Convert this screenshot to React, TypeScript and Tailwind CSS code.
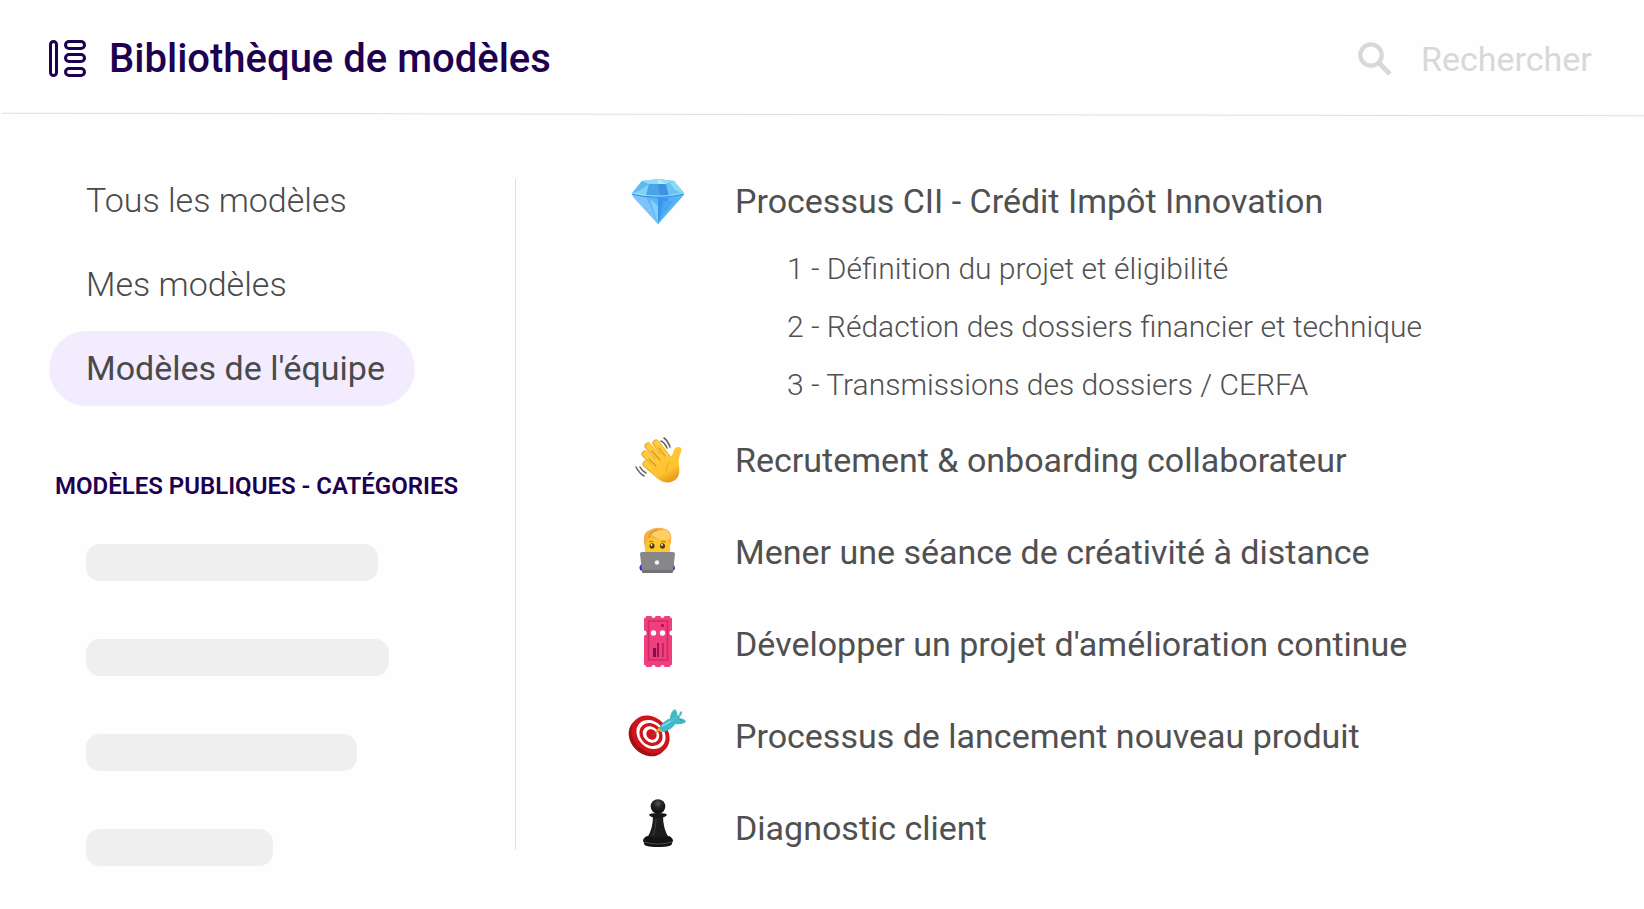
import { clsx } from 'clsx';

const NAV_ITEMS = [
  { label: 'Tous les modèles', active: false },
  { label: 'Mes modèles', active: false },
  { label: "Modèles de l'équipe", active: true },
];

const SKELETONS = ['w-[292px]', 'w-[303px]', 'w-[271px]', 'w-[187px]'];

const TEMPLATES = [
  {
    title: 'Processus CII - Crédit Impôt Innovation',
    icon: <GemIcon />,
    steps: [
      '1 - Définition du projet et éligibilité',
      '2 - Rédaction des dossiers financier et technique',
      '3 - Transmissions des dossiers / CERFA',
    ],
  },
  { title: 'Recrutement & onboarding collaborateur', icon: <WaveIcon />, steps: [] },
  { title: 'Mener une séance de créativité à distance', icon: <CoderIcon />, steps: [] },
  { title: "Développer un projet d'amélioration continue", icon: <TicketIcon />, steps: [] },
  { title: 'Processus de lancement nouveau produit', icon: <TargetIcon />, steps: [] },
  { title: 'Diagnostic client', icon: <PawnIcon />, steps: [] },
];

function LibraryIcon() {
  return (
    <svg width="38" height="38" viewBox="0 0 38 38" fill="none" stroke="#1e0050" strokeWidth="3" aria-hidden="true">
      <rect x="1.5" y="1.5" width="6" height="34" rx="3" />
      <rect x="16.5" y="1.5" width="19" height="7" rx="3.5" />
      <rect x="16.5" y="14.5" width="19" height="7" rx="3.5" />
      <rect x="16.5" y="28.5" width="19" height="7" rx="3.5" />
    </svg>
  );
}

function SearchIcon() {
  return (
    <svg width="34" height="34" viewBox="0 0 34 34" fill="none" stroke="currentColor" aria-hidden="true">
      <circle cx="13" cy="13" r="10.7" strokeWidth="4.2" />
      <path d="M21 21 L32 32" strokeWidth="4.8" />
    </svg>
  );
}

function GemIcon() {
  return (
    <svg width="60" height="60" viewBox="0 0 60 60" aria-hidden="true">
      <path d="M15 10 L31 8 L47 10 L57 22 L56 25 L31 53 L6 25 L5 22 Z" fill="#5bb9f5" />
      <path d="M15 10 L22 13 L19 25 L5 23 Z" fill="#7fd3f8" />
      <path d="M15 10 L5 23 L13 19 L22 13 Z" fill="#62b8ee" />
      <path d="M15 10 L31 8 L47 10 L39 13 H22 Z" fill="#93dcf7" />
      <path d="M31 8 L39 13 H31 Z" fill="#b4edfb" />
      <path d="M22 13 H39 L42 25 H19 Z" fill="#4ba3e8" />
      <path d="M31 13 H39 L42 25 H33 Z" fill="#3e93e0" />
      <path d="M39 13 L47 10 L57 23 L42 25 Z" fill="#6ac3f4" />
      <path d="M47 10 L57 23 L48 19 L43 12 Z" fill="#8adcf8" />
      <path d="M5 23 L20 27 L31 53 L6 26 Z" fill="#7cc3f9" />
      <path d="M20 27 H31 V53 Z" fill="#5cb6f7" />
      <path d="M31 27 H42 L31 53 Z" fill="#3797ef" />
      <path d="M42 27 L57 23 L31 53 Z" fill="#55b4f6" />
      <path d="M23 28 L31 35 L31 53 Z" fill="#83d0fb" />
      <path d="M36 30 L47 30 L33 47 Z" fill="#4aa6f3" />
      <path d="M5 23 Q31 30 57 23" fill="none" stroke="#3a91d6" strokeWidth="1.2" />
      <path d="M5 22 Q31 28 57 22" fill="none" stroke="#9fe4fb" strokeWidth="0.8" />
    </svg>
  );
}

function WaveIcon() {
  return (
    <svg width="60" height="60" viewBox="0 0 60 60" aria-hidden="true">
      <defs>
        <linearGradient id="hand" x1="0" y1="0" x2="0.5" y2="1">
          <stop offset="0" stopColor="#ffcd3c" />
          <stop offset="0.75" stopColor="#fec32f" />
          <stop offset="1" stopColor="#ea9d1e" />
        </linearGradient>
      </defs>
      <g stroke="#e9a524" strokeWidth="7" strokeLinecap="round">
        <path d="M29 13 L42 30" />
        <path d="M21 16 L38 35" />
        <path d="M18 24 L34 40" />
        <path d="M19 34 L32 45" />
      </g>
      <g stroke="#ffcb3a" strokeWidth="5.6" strokeLinecap="round">
        <path d="M29.500 13 L42 30" />
        <path d="M21.500 16 L38 35" />
        <path d="M18.500 24 L34 40" />
        <path d="M19.500 34 L32 45" />
      </g>
      <path
        d="M29 27 L37 22 L42 27 Q45 27 46 23 Q47 17 51 17 Q56 17 54 22 Q51 28 52 36 Q54 49 44 52 Q37 54 30 48 L23 40 Z"
        fill="url(#hand)"
      />
      <path d="M25 21 L33 30 M22 29 L29 36 M32 18 L38 26" fill="none" stroke="#dc941c" strokeWidth="1.2" strokeLinecap="round" />
      <path d="M43 32 Q38 36 40 43" fill="none" stroke="#eda823" strokeWidth="1" strokeLinecap="round" />
      <g fill="none" stroke="#666" strokeWidth="1.6" strokeLinecap="round">
        <path d="M34 11 Q38 13 40 18" />
        <path d="M37 8 Q41 11 43 17" />
        <path d="M13 37 Q15 41 19 43" />
        <path d="M9 37 Q12 43 17 46" />
      </g>
    </svg>
  );
}

function CoderIcon() {
  return (
    <svg width="60" height="60" viewBox="0 0 60 60" aria-hidden="true">
      <path d="M16 41 Q11 44 13 48 Q14 49 18 49 H44 Q48 49 48 46 Q48 43 45 41 Z" fill="#2a2ecb" />
      <path d="M18 20 Q18 9 30 9 Q43 9 43 20 V28 Q43 38 30 38 Q18 38 18 28 Z" fill="#fdc72f" />
      <path d="M18 26 Q14 10 23 8 Q30 4 38 7 Q47 9 43 25 Q43 18 38 16 Q29 19 24 15 Q19 18 18 26 Z" fill="#f3b045" />
      <path d="M23 15 Q27 7 39 8 Q44 11 43 17 Q32 19 25 13 Z" fill="#ffce66" />
      <path d="M22 16 Q22 10 30 8" fill="none" stroke="#cf8a2c" strokeWidth="1" />
      <ellipse cx="25" cy="24" rx="2.500" ry="2.800" fill="#54380f" />
      <ellipse cx="35.500" cy="24" rx="2.500" ry="2.800" fill="#54380f" />
      <circle cx="24.500" cy="23" r="0.900" fill="#fff" />
      <circle cx="35" cy="23" r="0.900" fill="#fff" />
      <path d="M22 20 Q24 18.500 26.500 20 M34 20 Q36.500 18.500 39 20" fill="none" stroke="#a86f17" strokeWidth="1" />
      <path d="M15 30 H46 Q48 30 48 32 L46 49 H15 L13 32 Q13 30 15 30 Z" fill="#87878a" />
      <path d="M15 48 H46 V50 Q46 51 45 51 H16 Q15 51 15 50 Z" fill="#717175" />
      <circle cx="30" cy="40.500" r="2.200" fill="#f5f5f5" />
    </svg>
  );
}

function TicketIcon() {
  return (
    <svg width="60" height="60" viewBox="0 0 60 60" aria-hidden="true">
      <rect x="17" y="2" width="28" height="51" rx="1" fill="#ef3f7d" />
      <rect x="21.500" y="7" width="19" height="39" fill="none" stroke="#cf2867" strokeWidth="1.500" />
      <rect x="34" y="10" width="3" height="3" fill="#b51655" />
      <g fill="#fefefe">
        <circle cx="17" cy="19" r="2.500" />
        <circle cx="26.500" cy="19" r="2.700" />
        <circle cx="35.500" cy="19" r="2.700" />
        <circle cx="45" cy="19" r="2.500" />
        <circle cx="17" cy="2" r="2.200" />
        <circle cx="26.500" cy="2" r="2" />
        <circle cx="35.500" cy="2" r="2" />
        <circle cx="45" cy="2" r="2.200" />
        <circle cx="17" cy="53" r="2.200" />
        <circle cx="26.500" cy="53" r="2" />
        <circle cx="35.500" cy="53" r="2" />
        <circle cx="45" cy="53" r="2.200" />
      </g>
      <rect x="26" y="34" width="3" height="9" fill="#7d1156" />
      <rect x="30" y="29" width="2" height="14" fill="#8f1657" />
      <rect x="35" y="29" width="2" height="14" fill="#cb2463" />
    </svg>
  );
}

function TargetIcon() {
  return (
    <svg width="60" height="60" viewBox="0 0 60 60" aria-hidden="true">
      <ellipse cx="21" cy="31" rx="21" ry="17.500" transform="rotate(45 21 31)" fill="#a01015" />
      <ellipse cx="23.500" cy="28.500" rx="21" ry="17" transform="rotate(45 23.500 28.500)" fill="#d0141b" />
      <ellipse cx="24" cy="28.500" rx="16" ry="13" transform="rotate(45 24 28.500)" fill="#fff" />
      <ellipse cx="24" cy="28.500" rx="12.500" ry="10.500" transform="rotate(45 24 28.500)" fill="#d0141b" />
      <ellipse cx="24" cy="28.500" rx="9" ry="7.500" transform="rotate(45 24 28.500)" fill="#fff" />
      <ellipse cx="24.500" cy="28.500" rx="5.500" ry="4.800" transform="rotate(45 24.500 28.500)" fill="#d0141b" />
      <path d="M25 29 L33 24" stroke="#8f6b1c" strokeWidth="1" />
      <path d="M29 25 L33 20 L37 26 Z" fill="#e5b323" />
      <path d="M32 22 Q37 14 44 12 L49 17 Q45 24 36 26 Z" fill="#3fb8c9" />
      <path d="M43 13 Q43 6 48 3 Q51 6 50 11 L54 5 Q57 6 52 12 Q59 13 59 16 Q55 19 48 18 Z" fill="#43b9c8" />
      <path d="M35 20 Q41 18 53 8" fill="none" stroke="#86dfe7" strokeWidth="1.600" />
      <path d="M44 15 L50 10 L55 15" fill="none" stroke="#2b96a6" strokeWidth="0.800" />
    </svg>
  );
}

function PawnIcon() {
  return (
    <svg width="60" height="60" viewBox="0 0 60 60" aria-hidden="true">
      <defs>
        <radialGradient id="pawnHead" cx="0.5" cy="0.3" r="0.6">
          <stop offset="0" stopColor="#555" />
          <stop offset="0.5" stopColor="#222" />
          <stop offset="1" stopColor="#111" />
        </radialGradient>
      </defs>
      <path d="M26 18 H36 Q36 31 42 40 H20 Q26 31 26 18 Z" fill="#1d1d1d" />
      <path d="M22 17 Q22 15 31 15 Q40 15 40 17 Q38 20 31 20 Q24 20 22 17 Z" fill="#171717" />
      <circle cx="31" cy="8.500" r="7.300" fill="url(#pawnHead)" />
      <path d="M20 38 Q31 42 42 38 Q46 40 46 43 L45 45 Q46 49 31 49 Q16 49 17 45 L16 43 Q16 40 20 38 Z" fill="#141414" />
      <path d="M17 44 Q31 48 45 44" fill="none" stroke="#4a4a4a" strokeWidth="1" />
      <path d="M29 21 Q29 30 26 38" fill="none" stroke="#3c3c3c" strokeWidth="1" />
    </svg>
  );
}

export default function App() {
  return (
    <div className="min-h-screen bg-[#fefefe] font-['Roboto',sans-serif] text-[#4a4a4a]">
      <header>
        <div className="flex h-[114px] items-center justify-between pt-1 pr-10 pl-[49px]">
          <div className="flex items-center gap-[22px]">
            <LibraryIcon />
            <h1 className="text-[40px] leading-[48px] font-medium text-[#1e0050]">Bibliothèque de modèles</h1>
          </div>
          <div className="flex items-center gap-[29px] text-[#d8d8d8]">
            <SearchIcon />
            <input
              type="text"
              aria-label="Rechercher"
              placeholder="Rechercher"
              className="w-[183px] bg-transparent text-[34px] leading-[44px] outline-none placeholder:text-[#d8d8d8]"
            />
          </div>
        </div>
        <div className="ml-0.5 h-px rotate-[0.09deg] bg-[#dedede]" />
      </header>

      <div className="flex items-start">
        <aside className="w-[515px] shrink-0 pt-12 pl-[49px]">
          <nav className="flex flex-col items-start gap-[9px]">
            {NAV_ITEMS.map((item) => (
              <a
                key={item.label}
                href="#"
                className={clsx(
                  'flex h-[75px] items-center rounded-full pr-[30px] pb-0.5 pl-[37px] text-[34px] leading-[44px]',
                  item.active ? 'bg-[#f3ecff]' : 'font-light',
                )}
              >
                {item.label}
              </a>
            ))}
          </nav>
          <h2 className="mt-16 ml-[6px] text-2xl leading-8 font-semibold text-[#1e0050]">
            MODÈLES PUBLIQUES - CATÉGORIES
          </h2>
          <div className="mt-[42px] ml-[37px] flex flex-col gap-[58px]">
            {SKELETONS.map((width) => (
              <div key={width} className={clsx('h-[37px] rounded-[14px] bg-[#efefef]', width)} />
            ))}
          </div>
        </aside>

        <main className="mt-16 flex-1 border-l border-[#dedede] pl-[111px] text-[#505050]">
          <ul>
            {TEMPLATES.map((template) => (
              <li key={template.title} className={clsx('last:mb-0', template.steps.length > 0 ? 'mb-[33px]' : 'mb-12')}>
                <a href="#" className="flex h-11 items-center gap-12 text-[34px] leading-[44px]">
                  {template.icon}
                  {template.title}
                </a>
                {template.steps.length > 0 && (
                  <ol className="mt-[26px] ml-[160px] flex flex-col gap-[18px] text-[30px] leading-10 font-light">
                    {template.steps.map((step) => (
                      <li key={step}>{step}</li>
                    ))}
                  </ol>
                )}
              </li>
            ))}
          </ul>
        </main>
      </div>
    </div>
  );
}
